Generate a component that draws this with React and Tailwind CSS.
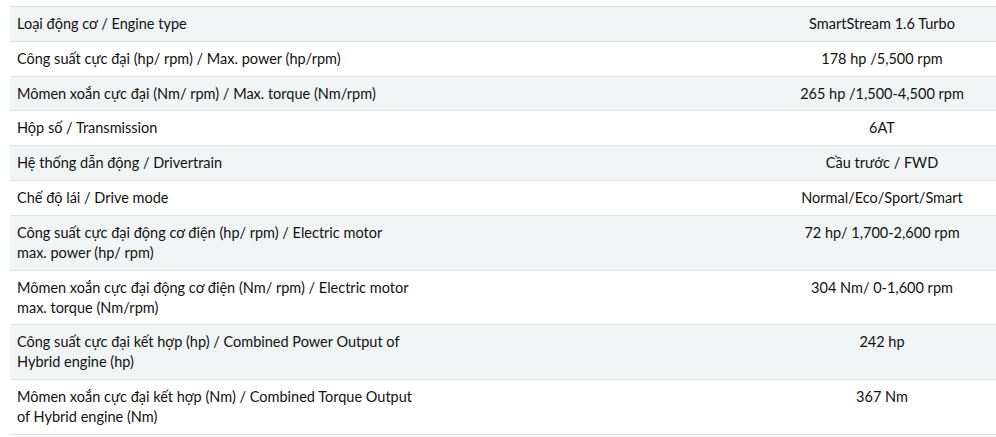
import React from 'react';

const specs = [
  ['Loại động cơ / Engine type', 'SmartStream 1.6 Turbo'],
  ['Công suất cực đại (hp/ rpm) / Max. power (hp/rpm)', '178 hp /5,500 rpm'],
  ['Mômen xoắn cực đại (Nm/ rpm) / Max. torque (Nm/rpm)', '265 hp /1,500-4,500 rpm'],
  ['Hộp số / Transmission', '6AT'],
  ['Hệ thống dẫn động / Drivertrain', 'Cầu trước / FWD'],
  ['Chế độ lái / Drive mode', 'Normal/Eco/Sport/Smart'],
  ['Công suất cực đại động cơ điện (hp/ rpm) / Electric motor max. power (hp/ rpm)', '72 hp/ 1,700-2,600 rpm'],
  ['Mômen xoắn cực đại động cơ điện (Nm/ rpm) / Electric motor max. torque (Nm/rpm)', '304 Nm/ 0-1,600 rpm'],
  ['Công suất cực đại kết hợp (hp) / Combined Power Output of Hybrid engine (hp)', '242 hp'],
  ['Mômen xoắn cực đại kết hợp (Nm) / Combined Torque Output of Hybrid engine (Nm)', '367 Nm'],
];

const App = () => {
  return (
    <div className="min-h-screen bg-white pl-[10px] pt-[6px] font-['Lato',sans-serif] text-[14.5px] leading-[20px] text-[#111]">
      <div className="border-t border-[#dfe1e3]">
        {specs.map(([label, value], i) => (
          <div
            key={label}
            className={`grid grid-cols-[414px_1fr_228px] border-b border-[#dfe1e3] ${i % 2 === 0 ? 'bg-[#f1f4f5]' : 'bg-white'}`}
          >
            <div className="pl-[7px] pr-[11px] pt-[7px] pb-[6.8px]">{label}</div>
            <div />
            <div className="pt-[7px] pb-[6.8px] text-center">{value}</div>
          </div>
        ))}
      </div>
    </div>
  );
};

export default App;
